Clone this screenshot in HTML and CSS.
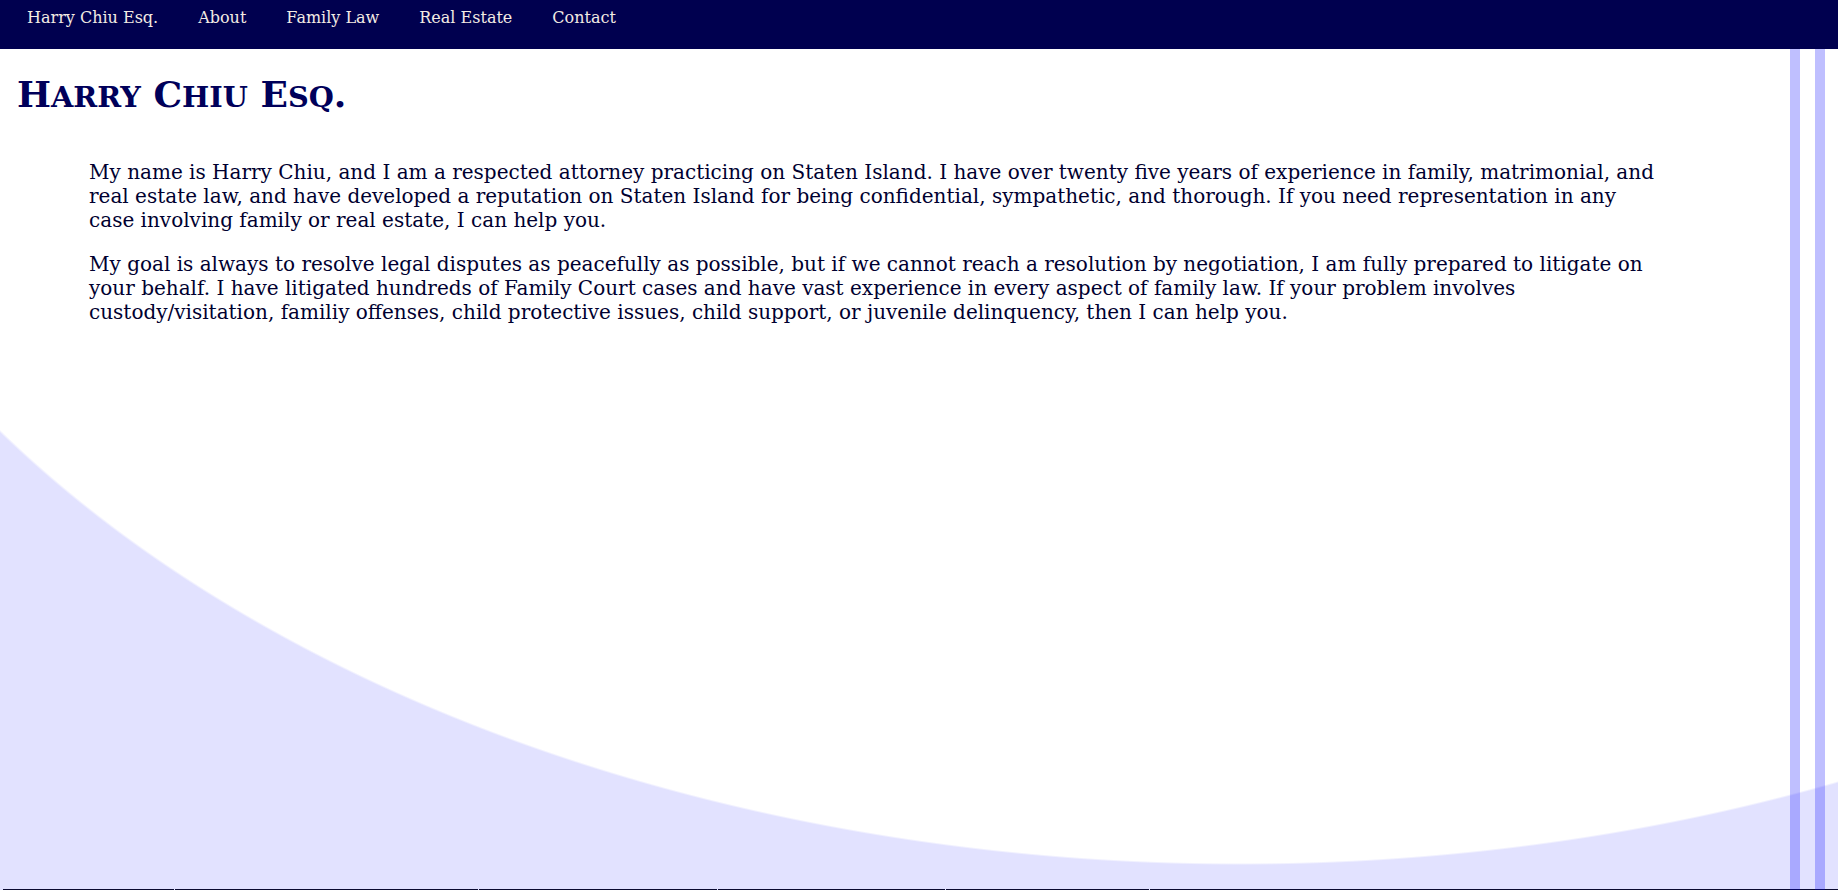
FILE: index.html
```html
<!DOCTYPE html>
<html lang="en">
<head>
<meta charset="utf-8">
<title>Harry Chiu Esq.</title>
<link rel="stylesheet" href="styles.css">
</head>
<body>
<nav class="topnav">
  <a class="topnav-link" href="#">Harry Chiu Esq.</a>
  <a class="topnav-link" href="#">About</a>
  <a class="topnav-link" href="#">Family Law</a>
  <a class="topnav-link" href="#">Real Estate</a>
  <a class="topnav-link" href="#">Contact</a>
</nav>
<main class="content">
  <h1 class="site-title">H<span class="sc">arry</span> C<span class="sc">hiu</span> E<span class="sc">sq</span>.</h1>
  <p class="intro">My name is Harry Chiu, and I am a respected attorney practicing on Staten Island. I have over twenty five years of experience in family, matrimonial, and real estate law, and have developed a reputation on Staten Island for being confidential, sympathetic, and thorough. If you need representation in any case involving family or real estate, I can help you.</p>
  <p class="intro">My goal is always to resolve legal disputes as peacefully as possible, but if we cannot reach a resolution by negotiation, I am fully prepared to litigate on your behalf. I have litigated hundreds of Family Court cases and have vast experience in every aspect of family law. If your problem involves custody/visitation, familiy offenses, child protective issues, child support, or juvenile delinquency, then I can help you.</p>
</main>
<footer class="footer">
  <span class="footer-cell footer-cell-a"></span>
  <span class="footer-cell footer-cell-b"></span>
  <span class="footer-cell footer-cell-c"></span>
  <span class="footer-cell footer-cell-d"></span>
  <span class="footer-cell footer-cell-e"></span>
  <span class="footer-cell footer-cell-f"></span>
  <span class="footer-cell footer-cell-g"></span>
</footer>
<div class="stripes" aria-hidden="true">
  <span class="stripe"></span>
  <span class="stripe"></span>
</div>
</body>
</html>
```

FILE: styles.css
```css
html, body {
  margin: 0;
  padding: 0;
}

body {
  min-height: 100vh;
  display: flex;
  flex-direction: column;
  font-family: "DejaVu Serif", serif;
  color: #000030;
  background-color: #e2e2ff;
  background-image: radial-gradient(ellipse 1500px 988px at 1240px -123px, #ffffff 99.8%, #e2e2ff 100%);
  background-repeat: no-repeat;
  overflow: hidden;
}

.topnav {
  flex: 0 0 auto;
  height: 49px;
  box-sizing: border-box;
  background: #00004f;
  display: flex;
  align-items: flex-start;
  padding: 8px 0 0 7px;
}

.topnav-link {
  color: #f3ebe3;
  text-decoration: none;
  font-size: 16px;
  padding: 0 20px;
}

.content {
  flex: 1 1 auto;
  padding: 0 17px;
}

.site-title {
  font-size: 36px;
  font-weight: bold;
  text-transform: uppercase;
  color: #00005a;
  margin: 24px 0 45px;
}

.sc {
  font-size: 0.8em;
}

.intro {
  font-size: 20px;
  margin: 20px 160px 20px 72px;
}

.footer {
  flex: 0 0 1px;
  height: 1px;
  display: flex;
  background: #e2e2ff;
}

.footer-cell {
  height: 1px;
  background: #0a0a30;
  margin-left: 1px;
}

.footer-cell-a { flex: 0 0 2px; margin-left: 0; background: transparent; }
.footer-cell-b { flex: 0 0 171px; }
.footer-cell-c { flex: 0 0 303px; }
.footer-cell-d { flex: 0 0 238px; }
.footer-cell-e { flex: 0 0 227px; }
.footer-cell-f { flex: 0 0 203px; }
.footer-cell-g { flex: 1 1 auto; }

.stripes {
  position: fixed;
  top: 49px;
  bottom: 0;
  right: 13px;
  display: flex;
  gap: 15px;
  pointer-events: none;
}

.stripe {
  width: 10px;
  background: rgba(0, 0, 255, 0.25);
}
```
